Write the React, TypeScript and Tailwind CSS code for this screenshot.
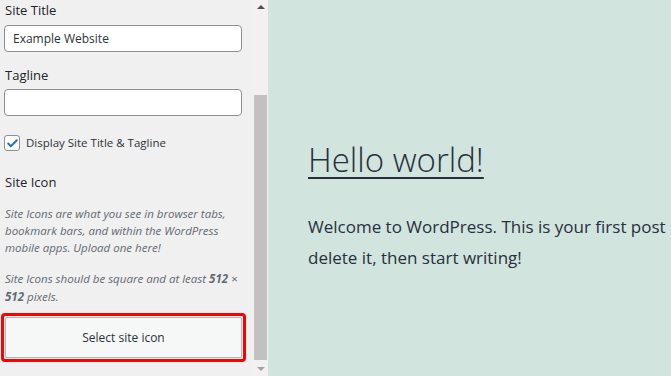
import { Check } from 'lucide-react';

const sans = "font-['Open_Sans','Noto_Sans',sans-serif]";

export default function App() {
  return (
    <div className={`flex w-[671px] h-[376px] overflow-hidden ${sans}`}>
      <div className="w-[253px] shrink-0 bg-[#f0f0f1] text-[#1d2327] pl-[4px] pr-[10px]">
        <div className="mt-[1px] h-[18px] leading-[18px] text-[13px] font-medium pl-[1px]">Site Title</div>
        <div className="mt-[6px] h-[27px] w-[238px] rounded-[4px] border border-[#8c8f94] bg-white px-[8px] text-[12px] leading-[25px] text-[#2c3338]">
          Example Website
        </div>
        <div className="mt-[14px] h-[18px] leading-[18px] text-[13px] font-medium pl-[1px]">Tagline</div>
        <div className="mt-[5px] h-[27px] w-[238px] rounded-[4px] border border-[#8c8f94] bg-white" />
        <div className="mt-[19px] flex items-center gap-[6px] h-[16px]">
          <div className="w-[16px] h-[16px] rounded-[3px] border border-[#8c8f94] bg-white flex items-center justify-center">
            <Check size={13} strokeWidth={3.5} className="text-[#2271b1]" />
          </div>
          <span className="text-[11.5px] text-[#2c3338]">Display Site Title &amp; Tagline</span>
        </div>
        <div className="mt-[22px] h-[18px] leading-[18px] text-[13px] font-medium pl-[1px]">Site Icon</div>
        <p className="mt-[14px] text-[11.5px] leading-[17px] italic text-[#646970] pl-[1px]">
          Site Icons are what you see in browser tabs, bookmark bars, and within the WordPress mobile apps. Upload one here!
        </p>
        <p className="mt-[14px] text-[11.5px] leading-[18px] italic text-[#646970] pl-[1px]">
          Site Icons should be square and at least <strong className="font-bold">512</strong> × <strong className="font-bold">512</strong> pixels.
        </p>
        <div className="mt-[7px] -ml-[3px] w-[245px] h-[49px] rounded-[4px] border-[3px] border-[#ff0000] p-[1px]">
          <div className="h-full rounded-[2px] border border-[#b8b8b8] bg-[#f6f7f7] flex items-center justify-center text-[12px] text-[#2c3338]">
            Select site icon
          </div>
        </div>
      </div>
      <div className="w-[15px] shrink-0 bg-[#f1f1f1] flex flex-col items-center">
        <div className="h-[14px] flex items-center justify-center">
          <div className="w-0 h-0 border-l-[4px] border-r-[4px] border-b-[4px] border-l-transparent border-r-transparent border-b-[#505050]" />
        </div>
        <div className="flex-1 w-full flex flex-col pt-[81px] pb-[2px] px-[1px]">
          <div className="flex-1 bg-[#c1c1c1]" />
        </div>
        <div className="h-[14px] flex items-center justify-center">
          <div className="w-0 h-0 border-l-[4px] border-r-[4px] border-t-[4px] border-l-transparent border-r-transparent border-t-[#a3a3a3]" />
        </div>
      </div>
      <div className="flex-1 bg-[#d1e4dd] text-[#28303d] pl-[40px] pt-[138px] whitespace-nowrap overflow-hidden">
        <h1 className="text-[33px] leading-[44px] font-light underline decoration-[2px] underline-offset-[5px]">Hello world!</h1>
        <p className="mt-[29px] text-[17px] leading-[31px]">Welcome to WordPress. This is your first post</p>
        <p className="text-[17px] leading-[31px]">delete it, then start writing!</p>
      </div>
    </div>
  );
}
